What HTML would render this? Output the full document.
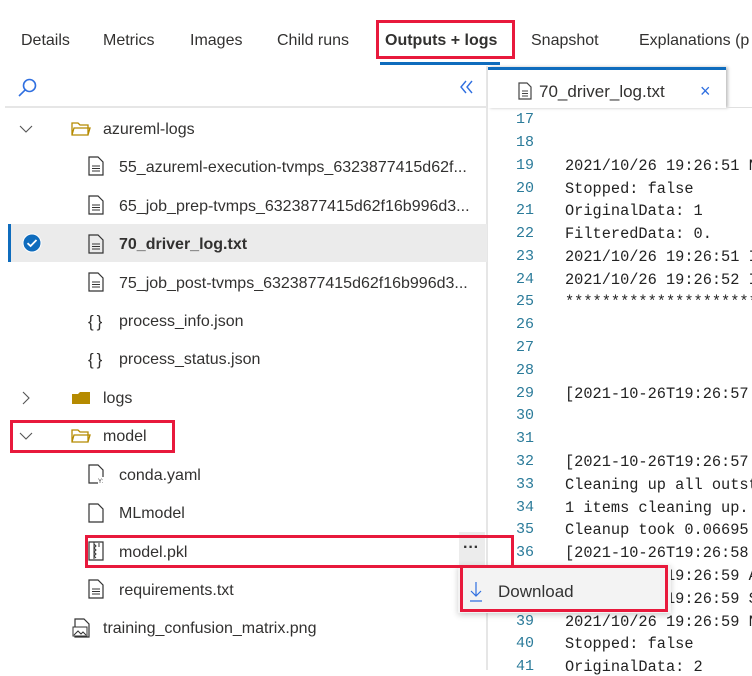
<!DOCTYPE html>
<html><head><meta charset="utf-8"><style>
*{margin:0;padding:0;box-sizing:border-box}
body{width:752px;height:670px;overflow:hidden;background:#fff;font-family:"Liberation Sans",sans-serif;color:#323130;position:relative}
.a{position:absolute;white-space:nowrap}
.tab{top:32px;font-size:16px;color:#323130}
.row{font-size:16px;line-height:20px;margin-top:2px}
.num{position:absolute;left:490px;width:44px;text-align:right;font-family:"Liberation Mono",monospace;font-size:15px;color:#2b7b9a;margin-top:2px}
.code{position:absolute;left:565px;font-family:"Liberation Mono",monospace;font-size:15.3px;color:#222;white-space:pre;margin-top:2px}
.red{position:absolute;border:3px solid #e8193c}
svg{position:absolute}
</style></head><body>
<div class="a tab" style="left:21px">Details</div>
<div class="a tab" style="left:103px">Metrics</div>
<div class="a tab" style="left:190px">Images</div>
<div class="a tab" style="left:277px">Child runs</div>
<div class="a tab" style="left:385px;font-weight:bold">Outputs + logs</div>
<div class="a tab" style="left:531px">Snapshot</div>
<div class="a tab" style="left:639px">Explanations (p</div>
<div class="a" style="left:380px;top:62px;width:120px;height:3px;background:#0f6cbd"></div>
<div class="red" style="left:376px;top:20px;width:139px;height:39px"></div>

<svg style="left:16px;top:76px" width="24" height="24" viewBox="0 0 24 24"><circle cx="13.5" cy="9.5" r="6" fill="none" stroke="#2f6fe0" stroke-width="1.6"/><line x1="9.3" y1="13.8" x2="3" y2="20" stroke="#2f6fe0" stroke-width="1.6"/></svg>
<svg style="left:458px;top:78px" width="18" height="18" viewBox="0 0 18 18"><path d="M8 3 L3 9 L8 15 M14 3 L9 9 L14 15" fill="none" stroke="#2f6fe0" stroke-width="1.4"/></svg>
<div class="a" style="left:5px;top:106px;width:482px;height:2px;background:#e6e6e6"></div>
<div class="a" style="left:486px;top:66px;width:2px;height:604px;background:#e6e6e6"></div>

<div class="a" style="left:488px;top:67px;width:238px;height:41px;background:#fff;border-top:3px solid #0f6cbd;box-shadow:2px 0 3px rgba(0,0,0,.25)"></div>
<div class="a" style="left:726px;top:107px;width:26px;height:1px;background:#e0e0e0"></div>
<svg style="left:518px;top:82px" width="14" height="18" viewBox="0 0 14 18"><path d="M1 1H9L13 5V17H1Z" fill="none" stroke="#444" stroke-width="1.2"/><path d="M4 9H10M4 11.5H10M4 14H10" stroke="#444"/></svg>
<div class="a" style="left:539px;top:82px;font-size:17px">70_driver_log.txt</div>
<div class="a" style="left:700px;top:81px;font-size:18px;color:#2f6fe0">×</div>

<div class="a" style="left:8px;top:224px;width:479px;height:38px;background:#ebebeb"></div>
<div class="a" style="left:8px;top:224px;width:3px;height:38px;background:#0f6cbd"></div>
<svg style="left:22px;top:233px" width="20" height="20" viewBox="0 0 20 20"><circle cx="10" cy="10" r="9" fill="#0f6cbd" stroke="#fff" stroke-width="1"/><path d="M5.5 10.2L8.6 13L14.5 7" fill="none" stroke="#fff" stroke-width="1.8"/></svg>

<svg style="left:18px;top:123px" width="16" height="12" viewBox="0 0 16 12"><path d="M2 3L8 9L14 3" fill="none" stroke="#555" stroke-width="1.1"/></svg>
<svg style="left:18px;top:430px" width="16" height="12" viewBox="0 0 16 12"><path d="M2 3L8 9L14 3" fill="none" stroke="#555" stroke-width="1.1"/></svg>
<svg style="left:20px;top:390px" width="12" height="16" viewBox="0 0 12 16"><path d="M3 2L9 8L3 14" fill="none" stroke="#555" stroke-width="1.1"/></svg>

<svg style="left:71px;top:120px" width="20" height="18" viewBox="0 0 20 18"><path d="M1 3H7L9 5H17V15H1Z M1 15L3 8H19L17 15" fill="none" stroke="#b58a00" stroke-width="1.3"/></svg>
<svg style="left:71px;top:427px" width="20" height="18" viewBox="0 0 20 18"><path d="M1 3H7L9 5H17V15H1Z M1 15L3 8H19L17 15" fill="none" stroke="#b58a00" stroke-width="1.3"/></svg>
<svg style="left:71px;top:389px" width="20" height="18" viewBox="0 0 20 18"><path d="M1 5H7L9 3H19V15H1Z" fill="#b58a00"/></svg>

<div class="a row" style="left:103px;top:118px">azureml-logs</div>
<div class="a row" style="left:103px;top:387px">logs</div>
<div class="a row" style="left:103px;top:425px">model</div>
<div class="a row" style="left:103px;top:617px">training_confusion_matrix.png</div>

<svg style="left:88px;top:156px" width="16" height="20" viewBox="0 0 16 20"><path d="M1 1H10L15 6V19H1Z" fill="none" stroke="#333" stroke-width="1.2"/><path d="M4 10H12M4 12.5H12M4 15H12" stroke="#333"/></svg>
<svg style="left:88px;top:195px" width="16" height="20" viewBox="0 0 16 20"><path d="M1 1H10L15 6V19H1Z" fill="none" stroke="#333" stroke-width="1.2"/><path d="M4 10H12M4 12.5H12M4 15H12" stroke="#333"/></svg>
<svg style="left:88px;top:234px" width="16" height="20" viewBox="0 0 16 20"><path d="M1 1H10L15 6V19H1Z" fill="none" stroke="#333" stroke-width="1.2"/><path d="M4 10H12M4 12.5H12M4 15H12" stroke="#333"/></svg>
<svg style="left:88px;top:272px" width="16" height="20" viewBox="0 0 16 20"><path d="M1 1H10L15 6V19H1Z" fill="none" stroke="#333" stroke-width="1.2"/><path d="M4 10H12M4 12.5H12M4 15H12" stroke="#333"/></svg>
<div class="a row" style="left:88px;top:310px;letter-spacing:3px;font-size:17px">{}</div>
<div class="a row" style="left:88px;top:348px;letter-spacing:3px;font-size:17px">{}</div>
<svg style="left:88px;top:464px" width="16" height="20" viewBox="0 0 16 20"><path d="M10 19H1V1H10L15 6V13" fill="none" stroke="#333" stroke-width="1.2"/><text x="10" y="19" font-size="6" font-family="Liberation Sans" fill="#333">Y:</text></svg>
<svg style="left:88px;top:503px" width="16" height="20" viewBox="0 0 16 20"><path d="M1 1H10L15 6V19H1Z" fill="none" stroke="#333" stroke-width="1.2"/></svg>
<svg style="left:88px;top:541px" width="16" height="20" viewBox="0 0 16 20"><path d="M1 1H15V19H1Z" fill="none" stroke="#333" stroke-width="1.2"/><path d="M6 1V18M6 3L8 5L6 7L8 9L6 11L8 13L6 15L8 17M11 2V6" fill="none" stroke="#333"/></svg>
<svg style="left:88px;top:579px" width="16" height="20" viewBox="0 0 16 20"><path d="M1 1H10L15 6V19H1Z" fill="none" stroke="#333" stroke-width="1.2"/><path d="M4 10H12M4 12.5H12M4 15H12" stroke="#333"/></svg>
<svg style="left:72px;top:618px" width="20" height="20" viewBox="0 0 20 20"><path d="M3 1H12L17 6V19H3Z" fill="none" stroke="#333" stroke-width="1.2"/><path d="M1 9H15V18H1Z" fill="#fff" stroke="#333"/><path d="M2 17L6 13L9 16L11 14L14 17" fill="none" stroke="#333"/></svg>

<div class="a row" style="left:119px;top:156px">55_azureml-execution-tvmps_6323877415d62f...</div>
<div class="a row" style="left:119px;top:195px">65_job_prep-tvmps_6323877415d62f16b996d3...</div>
<div class="a row" style="left:119px;top:233px;font-weight:bold">70_driver_log.txt</div>
<div class="a row" style="left:119px;top:272px">75_job_post-tvmps_6323877415d62f16b996d3...</div>
<div class="a row" style="left:119px;top:310px">process_info.json</div>
<div class="a row" style="left:119px;top:348px">process_status.json</div>
<div class="a row" style="left:119px;top:464px">conda.yaml</div>
<div class="a row" style="left:119px;top:502px">MLmodel</div>
<div class="a row" style="left:119px;top:541px">model.pkl</div>
<div class="a row" style="left:119px;top:579px">requirements.txt</div>

<div class="a" style="left:459px;top:532px;width:26px;height:34px;background:#ececec"></div>
<div class="a" style="left:463px;top:539px;font-size:16px;font-weight:bold;color:#333">···</div>

<div class="num" style="top:109px">17</div>
<div class="num" style="top:132px">18</div>
<div class="num" style="top:155px">19</div><div class="code" style="top:155px">2021/10/26 19:26:51 N</div>
<div class="num" style="top:178px">20</div><div class="code" style="top:178px">Stopped: false</div>
<div class="num" style="top:200px">21</div><div class="code" style="top:200px">OriginalData: 1</div>
<div class="num" style="top:223px">22</div><div class="code" style="top:223px">FilteredData: 0.</div>
<div class="num" style="top:246px">23</div><div class="code" style="top:246px">2021/10/26 19:26:51 I</div>
<div class="num" style="top:269px">24</div><div class="code" style="top:269px">2021/10/26 19:26:52 I</div>
<div class="num" style="top:291px">25</div><div class="code" style="top:291px">**********************</div>
<div class="num" style="top:314px">26</div>
<div class="num" style="top:337px">27</div>
<div class="num" style="top:360px">28</div>
<div class="num" style="top:383px">29</div><div class="code" style="top:383px">[2021-10-26T19:26:57</div>
<div class="num" style="top:405px">30</div>
<div class="num" style="top:428px">31</div>
<div class="num" style="top:451px">32</div><div class="code" style="top:451px">[2021-10-26T19:26:57</div>
<div class="num" style="top:474px">33</div><div class="code" style="top:474px">Cleaning up all outst</div>
<div class="num" style="top:497px">34</div><div class="code" style="top:497px">1 items cleaning up.</div>
<div class="num" style="top:519px">35</div><div class="code" style="top:519px">Cleanup took 0.06695</div>
<div class="num" style="top:542px">36</div><div class="code" style="top:542px">[2021-10-26T19:26:58</div>
<div class="num" style="top:565px">37</div><div class="code" style="top:565px">2021/10/26 19:26:59 A</div>
<div class="num" style="top:588px">38</div><div class="code" style="top:588px">2021/10/26 19:26:59 S</div>
<div class="num" style="top:611px">39</div><div class="code" style="top:611px">2021/10/26 19:26:59 N</div>
<div class="num" style="top:633px">40</div><div class="code" style="top:633px">Stopped: false</div>
<div class="num" style="top:656px">41</div><div class="code" style="top:656px">OriginalData: 2</div>

<div class="a" style="left:458px;top:565px;width:213px;height:48px;background:#f3f3f3;box-shadow:0 2px 6px rgba(0,0,0,.2)"></div>
<svg style="left:469px;top:581px" width="14" height="22" viewBox="0 0 14 22"><path d="M7 1V15M2 10L7 15L12 10M1 20H13" fill="none" stroke="#2f6fe0" stroke-width="1.2"/></svg>
<div class="a" style="left:498px;top:582px;font-size:17px;color:#333">Download</div>

<div class="red" style="left:10px;top:420px;width:165px;height:33px"></div>
<div class="red" style="left:85px;top:535px;width:429px;height:33px"></div>
<div class="red" style="left:460px;top:565px;width:208px;height:47px"></div>
</body></html>
